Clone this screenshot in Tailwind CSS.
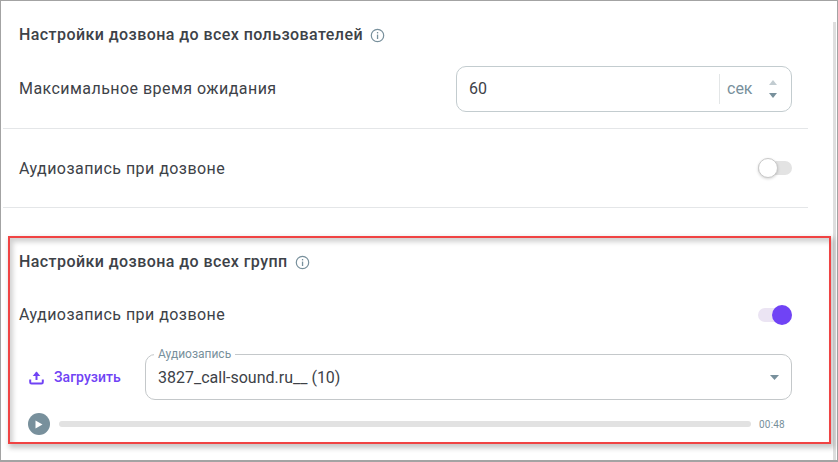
<!doctype html>
<html lang="ru">
<head>
<meta charset="utf-8">
<script src="https://cdn.jsdelivr.net/npm/@tailwindcss/browser@4"></script>
</head>
<body class="bg-white">
<div class="relative w-[838px] h-[462px] overflow-hidden bg-white font-['Roboto',sans-serif] text-[#3d4248] border-t border-l border-[#a3a3a3]">
  <div class="absolute right-0 top-0 bottom-0 w-px bg-[#a3a3a3]"></div>
  <div class="absolute left-0 right-0 bottom-0 h-[2px] bg-[#a3a3a3]"></div>
  <div class="absolute right-[2px] top-[21px] bottom-[2px] w-[3px] bg-[#dedede]"></div>

  <div class="w-[807px]">
    <div class="pl-[18px] pr-[16px] pt-[25px]">
      <div class="flex items-center h-[18px] gap-[7px]">
        <h2 class="text-[16px] font-medium tracking-[0.43px] leading-[18px]">Настройки дозвона до всех пользователей</h2>
        <svg width="15" height="15" viewBox="0 0 15 15" fill="none" class="mt-[1px]"><circle cx="7.5" cy="7.5" r="6.2" stroke="#78909c" stroke-width="1.2"/><rect x="6.9" y="6.6" width="1.3" height="4.4" fill="#78909c"/><rect x="6.9" y="4" width="1.3" height="1.4" fill="#78909c"/></svg>
      </div>
      <div class="flex items-center justify-between mt-[22px] h-[46px]">
        <span class="text-[16px] tracking-[0.45px]">Максимальное время ожидания</span>
        <div class="flex items-center w-[336px] h-[46px] border border-[#c3cccf] rounded-[10px] pl-[12px] pr-[14px]">
          <span class="flex-1 text-[16px] text-[#3d4248]">60</span>
          <span class="w-px h-[30px] bg-[#e3e6e7]"></span>
          <span class="ml-[7px] w-[42px] text-[16px] text-[#78909c]">сек</span>
          <svg width="8" height="18" viewBox="0 0 8 18" class="shrink-0"><path d="M0 5 4 0l4 5z" fill="#c2ccd1"/><path d="M0 13h8l-4 5z" fill="#78909c"/></svg>
        </div>
      </div>
    </div>
    <div class="h-px bg-[#e4e6e8] mt-[16px] ml-[2px]"></div>
    <div class="flex items-center justify-between pl-[18px] pr-[16px] h-[78px]">
      <span class="text-[16px] tracking-[0.45px] mt-[1px]">Аудиозапись при дозвоне</span>
      <span class="relative block w-[34px] h-[14px] rounded-full bg-[#e3e3e3]">
        <span class="absolute left-0 top-[-3px] w-5 h-5 rounded-full bg-white border border-[#c9c9c9] shadow-[0_1px_3px_rgba(0,0,0,0.18)]"></span>
      </span>
    </div>
    <div class="h-px bg-[#e4e6e8] ml-[2px]"></div>

    <div class="pl-[18px] pr-[16px] pt-[45px]">
      <div class="flex items-center h-[18px] gap-[7px]">
        <h2 class="text-[16px] font-medium tracking-[0.43px] leading-[18px]">Настройки дозвона до всех групп</h2>
        <svg width="15" height="15" viewBox="0 0 15 15" fill="none" class="mt-[1px]"><circle cx="7.5" cy="7.5" r="6.2" stroke="#78909c" stroke-width="1.2"/><rect x="6.9" y="6.6" width="1.3" height="4.4" fill="#78909c"/><rect x="6.9" y="4" width="1.3" height="1.4" fill="#78909c"/></svg>
      </div>
      <div class="flex items-center justify-between mt-[34px] h-[20px]">
        <span class="text-[16px] tracking-[0.45px]">Аудиозапись при дозвоне</span>
        <span class="relative block w-[34px] h-[14px] rounded-full bg-[#ebe4f3]">
          <span class="absolute right-0 top-[-3px] w-5 h-5 rounded-full bg-[#7043f5]"></span>
        </span>
      </div>
      <div class="flex items-center mt-[29px] h-[46px]">
        <div class="flex items-center w-[126px] pl-[10px] gap-[10px] text-[#7043f5]">
          <svg width="15" height="15" viewBox="0 0 15 15" fill="none"><path d="M7.500 10V2.500" stroke="#7043f5" stroke-width="2"/><path d="M3.700 6 7.500 1.500 11.300 6z" fill="#7043f5"/><path d="M1.200 9.500V12.200Q1.200 13.500 2.500 13.500H12.500Q13.800 13.500 13.800 12.200V9.500" stroke="#7043f5" stroke-width="2"/></svg>
          <span class="text-[14px] font-medium tracking-[0.05px]">Загрузить</span>
        </div>
        <div class="relative flex items-center justify-between w-[647px] h-[46px] border border-[#c4c8ca] rounded-[10px] pl-[12px] pr-[12px]">
          <span class="absolute left-[8px] top-[-8px] bg-white px-[4px] text-[12px] leading-[14px] text-[#78909c]">Аудиозапись</span>
          <span class="text-[16px] mt-[1px]">3827_call-sound.ru__ (10)</span>
          <svg width="9" height="5" viewBox="0 0 9 5"><path d="M0 0h9L4.500 5z" fill="#78909c"/></svg>
        </div>
      </div>
      <div class="flex items-center h-[22px] mt-[13px] pl-[9px]">
        <span class="flex items-center justify-center w-[22px] h-[22px] rounded-full bg-[#78909c] shrink-0">
          <svg width="8" height="9" viewBox="0 0 8 9"><path d="M0.500 0.500 7.500 4.500 0.500 8.500z" fill="#fff"/></svg>
        </span>
        <span class="block w-[692px] h-[6px] ml-[9px] rounded-full bg-[#e2e2e2]"></span>
        <span class="ml-[8px] text-[10px] tracking-[0.2px] text-[#78909c]">00:48</span>
      </div>
    </div>
  </div>

  <div class="absolute left-[7px] top-[235px] w-[823px] h-[208px] border-2 border-[#f04343] shadow-[2px_3px_5px_1px_rgba(0,0,0,0.22),inset_3px_4px_5px_0_rgba(0,0,0,0.18)] pointer-events-none"></div>
</div>
</body>
</html>
